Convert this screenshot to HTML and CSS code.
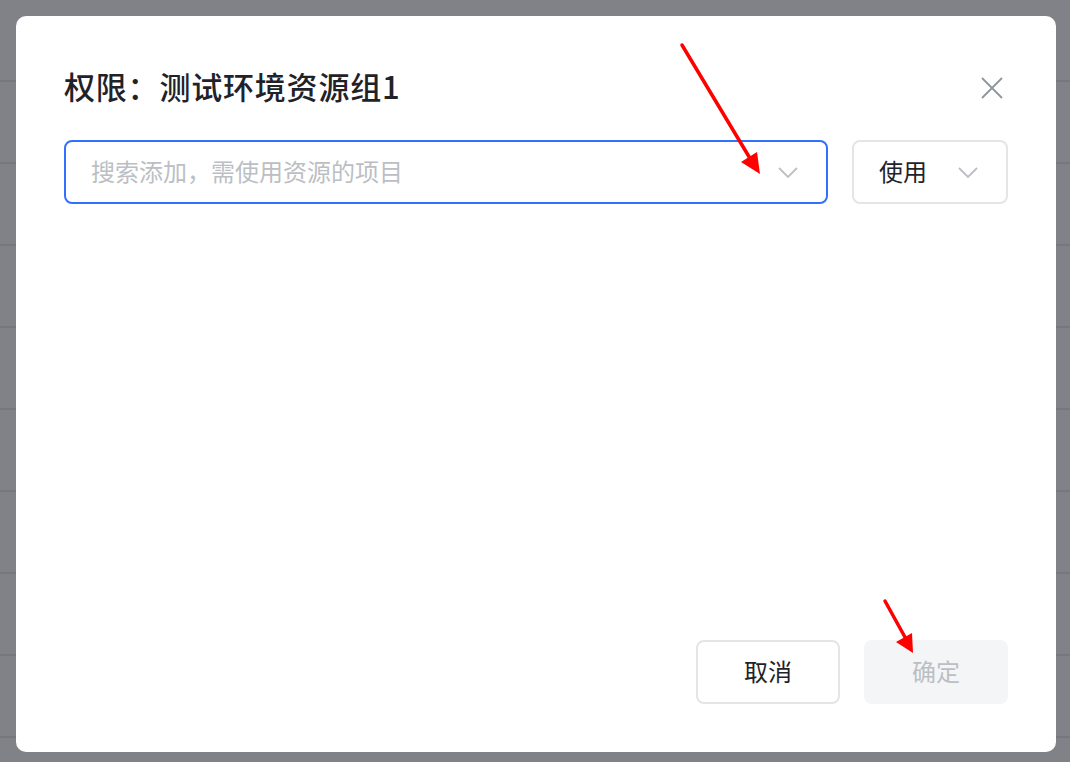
FILE: index.html
```html
<!DOCTYPE html>
<html lang="zh-CN">
<head>
<meta charset="utf-8">
<title>权限</title>
<link rel="stylesheet" href="styles.css">
</head>
<body>
<div class="modal">
  <div class="modal-header">
    <h1 class="modal-title">权限：测试环境资源组1</h1>
    <button class="close-btn" aria-label="关闭">
      <svg width="22" height="22" viewBox="0 0 22 22"><path d="M1 1L21 21M21 1L1 21" stroke="#8f959e" stroke-width="1.8" fill="none"/></svg>
    </button>
  </div>
  <div class="field-row">
    <div class="search-select">
      <span class="placeholder">搜索添加，需使用资源的项目</span>
      <svg class="chevron" width="20" height="11" viewBox="0 0 20 11"><path d="M1 1L10 10L19 1" stroke="#bbbfc4" stroke-width="1.8" fill="none"/></svg>
    </div>
    <div class="perm-select">
      <span class="value">使用</span>
      <svg class="chevron" width="20" height="11" viewBox="0 0 20 11"><path d="M1 1L10 10L19 1" stroke="#bbbfc4" stroke-width="1.8" fill="none"/></svg>
    </div>
  </div>
  <div class="spacer"></div>
  <div class="modal-footer">
    <button class="btn btn-cancel">取消</button>
    <button class="btn btn-confirm">确定</button>
  </div>
</div>
<svg class="annotations" width="1070" height="762" viewBox="0 0 1070 762">
  <line x1="682" y1="45" x2="751" y2="160" stroke="#ff0000" stroke-width="3.5" stroke-linecap="round"/>
  <polygon points="760,174 741,162 757,152" fill="#ff0000"/>
  <line x1="885" y1="601" x2="906" y2="639" stroke="#ff0000" stroke-width="3.5" stroke-linecap="round"/>
  <polygon points="913,653 896,642 912,633" fill="#ff0000"/>
</svg>
</body>
</html>
```

FILE: styles.css
```css
* { box-sizing: border-box; }

html, body {
  margin: 0;
  padding: 0;
}

body {
  width: 1070px;
  height: 762px;
  overflow: hidden;
  position: relative;
  font-family: "Noto Sans CJK SC", "Noto Sans", sans-serif;
  background-color: #808287;
  background-image: repeating-linear-gradient(
    to bottom,
    transparent 0px,
    transparent 80px,
    #76787d 80px,
    #76787d 82px
  );
  background-position: 0 0;
  padding: 16px 14px 10px 16px;
}

.modal {
  height: 736px;
  background: #ffffff;
  border-radius: 10px;
  padding: 54px 48px 48px 48px;
  display: flex;
  flex-direction: column;
}

.modal-header {
  display: flex;
  align-items: center;
  justify-content: space-between;
  height: 32px;
}

.modal-title {
  margin: 0;
  font-size: 31px;
  line-height: 32px;
  font-weight: 500;
  color: #1f2329;
  letter-spacing: 0.8px;
}

.close-btn {
  width: 24px;
  height: 24px;
  padding: 0;
  margin-right: 4px;
  margin-top: 4px;
  border: none;
  background: none;
  display: flex;
  align-items: center;
  justify-content: center;
}

.field-row {
  margin-top: 38px;
  display: flex;
  gap: 24px;
}

.search-select,
.perm-select {
  height: 64px;
  border-radius: 8px;
  display: flex;
  align-items: center;
  justify-content: space-between;
  font-size: 24px;
  padding-bottom: 3px;
}

.search-select {
  flex: 1;
  border: 2px solid #3370ff;
  padding-left: 25px;
  padding-right: 28px;
}

.perm-select {
  width: 156px;
  border: 2px solid #e4e5e7;
  padding-left: 25px;
  padding-right: 28px;
}

.placeholder {
  color: #bbbfc4;
}

.value {
  color: #1f2329;
}

.chevron {
  margin-top: 4px;
}

.spacer {
  flex: 1;
}

.modal-footer {
  display: flex;
  justify-content: flex-end;
  gap: 24px;
}

.btn {
  width: 144px;
  height: 64px;
  border-radius: 8px;
  font-family: "Noto Sans CJK SC", "Noto Sans", sans-serif;
  font-size: 24px;
  padding: 0 0 3px 0;
}

.btn-cancel {
  background: #ffffff;
  border: 2px solid #e4e5e7;
  color: #1f2329;
}

.btn-confirm {
  background: #f4f5f7;
  border: none;
  color: #bbbfc4;
}

.annotations {
  position: absolute;
  left: 0;
  top: 0;
  pointer-events: none;
}
```
